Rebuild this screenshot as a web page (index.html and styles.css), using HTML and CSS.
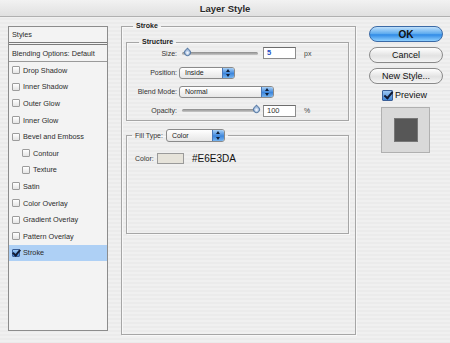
FILE: index.html
```html
<!DOCTYPE html>
<html lang="en">

<head>
    <meta charset="UTF-8">
    <meta name="viewport" content="width=device-width, initial-scale=1.0">
    <title>Layer Style</title>
    <link rel="stylesheet" href="styles.css">
</head>

<body>
    <div class="window">
        <div class="titlebar">Layer Style</div>

        <div class="content">
            <ul class="styleList">
                <li class="head">Styles</li>
                <li class="head blending">Blending Options: Default</li>
                <li><span class="check"></span>Drop Shadow</li>
                <li><span class="check"></span>Inner Shadow</li>
                <li><span class="check"></span>Outer Glow</li>
                <li><span class="check"></span>Inner Glow</li>
                <li><span class="check"></span>Bevel and Emboss</li>
                <li class="sub"><span class="check"></span>Contour</li>
                <li class="sub"><span class="check"></span>Texture</li>
                <li><span class="check"></span>Satin</li>
                <li><span class="check"></span>Color Overlay</li>
                <li><span class="check"></span>Gradient Overlay</li>
                <li><span class="check"></span>Pattern Overlay</li>
                <li class="selected"><span class="check checked"></span>Stroke</li>
            </ul>

            <fieldset class="group stroke">
                <legend>Stroke</legend>

                <fieldset class="group structure">
                    <legend>Structure</legend>
                    <div class="form">
                        <span class="label">Size:</span>
                        <div class="control">
                            <div class="slider"><span class="thumb thumbStart"></span></div>
                            <span class="field blue">5</span>
                            <span class="unit">px</span>
                        </div>

                        <span class="label">Position:</span>
                        <div class="control">
                            <span class="popup popupShort">Inside<span class="arrows"></span></span>
                        </div>

                        <span class="label">Blend Mode:</span>
                        <div class="control">
                            <span class="popup popupLong">Normal<span class="arrows"></span></span>
                        </div>

                        <span class="label">Opacity:</span>
                        <div class="control">
                            <div class="slider"><span class="thumb thumbEnd"></span></div>
                            <span class="field">100</span>
                            <span class="unit">%</span>
                        </div>
                    </div>
                </fieldset>

                <fieldset class="group fill">
                    <legend>
                        <span class="label">Fill Type:</span>
                        <span class="popup popupFill">Color<span class="arrows"></span></span>
                    </legend>
                    <div class="colorRow">
                        <span class="label">Color:</span>
                        <span class="swatch"></span>
                        <span class="hex">#E6E3DA</span>
                    </div>
                </fieldset>
            </fieldset>

            <div class="actions">
                <button class="btn primary">OK</button>
                <button class="btn">Cancel</button>
                <button class="btn">New Style...</button>
                <div class="previewToggle"><span class="check big checked"></span>Preview</div>
                <div class="previewBox"><span class="previewSquare"></span></div>
            </div>
        </div>
    </div>
</body>

</html>
```

FILE: styles.css
```css
* {
    box-sizing: border-box;
    margin: 0;
    padding: 0;
}

body {
    width: 450px;
    height: 343px;
    overflow: hidden;
    font-family: "Liberation Sans", Arial, sans-serif;
    color: #222;
    background: repeating-linear-gradient(#f0f0f0 0 2px, #ebebeb 2px 4px);
}

.titlebar {
    height: 17px;
    line-height: 17px;
    text-align: center;
    font-size: 9.5px;
    font-weight: bold;
    color: #2a2a2a;
    background: linear-gradient(#f2f2f2, #e0e0e0);
    border-bottom: 1px solid #b0b0b0;
    text-shadow: 0 1px 0 #f6f6f6;
}

.content {
    display: grid;
    grid-template-columns: 100px 235px 74px;
    column-gap: 13px;
    padding: 0 0 0 8px;
}

/* left list */
.styleList {
    list-style: none;
    margin-top: 9px;
    height: 305px;
    background: #f3f3f3;
    border: 1px solid #8c8c8c;
    font-size: 7.3px;
}

.styleList li {
    height: 16.6px;
    display: flex;
    align-items: center;
    padding-left: 3px;
    color: #2c2c2c;
}

.styleList .head {
    height: 18px;
    padding-left: 3px;
    border-bottom: 3px double #7a7a7a;
}

.styleList .blending {
    height: 17px;
    border-bottom: 1px solid #9a9a9a;
}

.styleList .sub {
    padding-left: 13px;
}

.styleList .selected {
    background: #aed0f5;
}

.check {
    width: 8px;
    height: 8px;
    margin-right: 3px;
    border: 1px solid #9c9c9c;
    border-radius: 1px;
    background: linear-gradient(#ffffff, #e4e4e4);
    flex-shrink: 0;
    position: relative;
}

.check.checked {
    border-color: #3a5f98;
    background: linear-gradient(#9cc7f2, #3f84d6);
}

.check.checked::after {
    content: "";
    position: absolute;
    left: 1px;
    top: -2px;
    width: 3px;
    height: 6px;
    border-right: 2px solid #111a33;
    border-bottom: 2px solid #111a33;
    transform: rotate(40deg);
}

/* group boxes */
.group {
    border: 1px solid #a6a6a6;
    box-shadow: inset 1px 1px 0 #f8f8f8, 1px 1px 0 #f8f8f8;
}

.group legend {
    font-size: 7px;
    font-weight: bold;
    line-height: 10px;
    padding: 0 3px;
}

.stroke {
    margin-top: 4px;
    height: 314px;
    padding: 5px 6px 0 4px;
}

.stroke > legend {
    margin-left: 7px;
}

.structure {
    height: 84px;
    padding: 0;
    margin-top: 1px;
}

.structure > legend {
    margin-left: 12px;
}

.fill {
    margin-top: 8px;
    height: 105px;
    padding: 0 0 0 8px;
}

.fill > legend {
    display: flex;
    align-items: center;
    gap: 3px;
    margin-left: -3px;
    font-weight: normal;
    line-height: 13px;
}

/* form rows */
.form {
    display: grid;
    grid-template-columns: 50px auto;
    grid-template-rows: 20px 19px 19px 19px;
    column-gap: 2px;
    align-items: center;
    margin-top: -4px;
}

.label {
    font-size: 7px;
    color: #333;
    text-align: right;
}

.control {
    display: flex;
    align-items: center;
}

.slider {
    width: 76px;
    height: 3px;
    margin-left: 3px;
    border-radius: 2px;
    background: linear-gradient(#8a8a8a, #c8c8c8);
    position: relative;
}

.thumb {
    position: absolute;
    top: -3px;
    width: 7px;
    height: 7px;
    border-radius: 0 50% 50% 50%;
    border: 1px solid #5d7fa8;
    background: radial-gradient(circle at 55% 55%, #ffffff, #a6c0e2 60%, #7194c4);
    transform: rotate(45deg);
}

.thumbStart {
    left: 2px;
}

.thumbEnd {
    right: -2px;
}

.field {
    width: 33px;
    height: 12px;
    margin-left: 5px;
    padding-left: 3px;
    background: #fff;
    border: 1px solid #8d8d8d;
    border-top-color: #6d6d6d;
    font-size: 7.5px;
    line-height: 10px;
    color: #333;
}

.field.blue {
    color: #1d4fc4;
    font-weight: bold;
}

.unit {
    margin-left: 8px;
    font-size: 7px;
    color: #444;
}

.popup {
    display: flex;
    align-items: center;
    height: 12px;
    padding-left: 5px;
    border: 1px solid #8a8a8a;
    border-radius: 3px;
    background: linear-gradient(#ffffff, #e6e6e6);
    font-size: 7px;
    font-weight: normal;
    color: #222;
    position: relative;
}

.popupShort {
    width: 56px;
}

.popupLong {
    width: 95px;
}

.popupFill {
    width: 59px;
    height: 13px;
}

.arrows {
    margin-left: auto;
    width: 12px;
    height: 100%;
    border-radius: 0 2px 2px 0;
    border-left: 1px solid #4a78b8;
    background: linear-gradient(#a8d0f6, #3d86dc 55%, #76b4f0);
    position: relative;
}

.arrows::before,
.arrows::after {
    content: "";
    position: absolute;
    left: 3px;
    border-left: 2.5px solid transparent;
    border-right: 2.5px solid transparent;
}

.arrows::before {
    top: 1px;
    border-bottom: 3px solid #10203a;
}

.arrows::after {
    bottom: 1px;
    border-top: 3px solid #10203a;
}

.colorRow {
    display: flex;
    align-items: center;
    margin-top: 11px;
}

.colorRow .label {
    width: 22px;
    text-align: left;
}

.swatch {
    width: 27px;
    height: 11px;
    background: #e6e3da;
    border: 1px solid #9a9a9a;
}

.hex {
    margin-left: 8px;
    font-size: 10px;
    color: #111;
}

/* right column */
.actions {
    display: flex;
    flex-direction: column;
    align-items: center;
    padding-top: 9px;
}

.btn {
    width: 74px;
    height: 16px;
    margin-bottom: 5px;
    border-radius: 8px;
    border: 1px solid #8a8a8a;
    background: linear-gradient(#ffffff, #e2e2e2 55%, #f4f4f4);
    font-family: "Liberation Sans", Arial, sans-serif;
    font-size: 9px;
    color: #111;
}

.btn.primary {
    border-color: #3b6aa6;
    background: linear-gradient(#bfe0fb, #5aa9ee 50%, #2f8ae6 55%, #8fd0ff);
    font-weight: bold;
    font-size: 10px;
}

.previewToggle {
    display: flex;
    align-items: center;
    align-self: flex-start;
    margin-left: 13px;
    height: 12px;
    font-size: 9px;
    color: #111;
}

.check.big {
    width: 11px;
    height: 11px;
    margin-right: 2px;
}

.check.big::after {
    left: 3px;
    top: -1px;
    width: 3px;
    height: 7px;
}

.previewBox {
    align-self: flex-start;
    margin-left: 12px;
    margin-top: 6px;
    width: 49px;
    height: 46px;
    display: grid;
    place-items: center;
    background: #d9d9d9;
    border: 1px solid #b0b0b0;
}

.previewSquare {
    width: 24px;
    height: 24px;
    background: #575757;
    border: 1px solid #777;
}
```
